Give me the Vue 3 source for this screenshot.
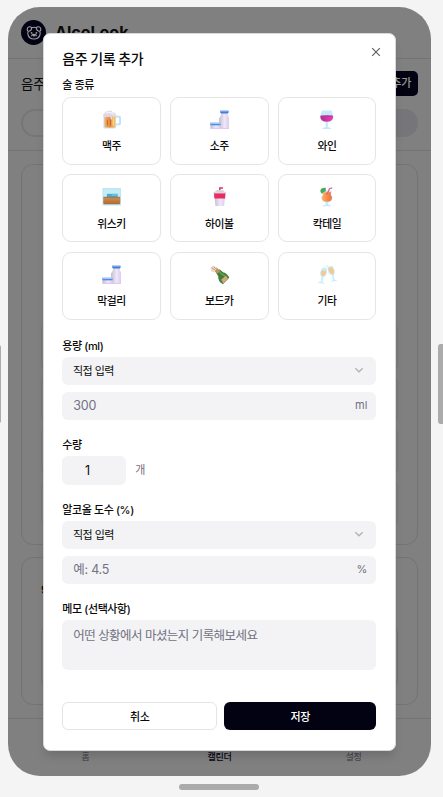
<script setup>
import { ref } from 'vue'

const drinks = [
  { name: '맥주', icon: 'beer' },
  { name: '소주', icon: 'bottle' },
  { name: '와인', icon: 'wine' },
  { name: '위스키', icon: 'whisky' },
  { name: '하이볼', icon: 'cup' },
  { name: '칵테일', icon: 'cocktail' },
  { name: '막걸리', icon: 'bottle' },
  { name: '보드카', icon: 'champagne' },
  { name: '기타', icon: 'cheers' }
]
const volume = ref('')
const count = ref('1')
const strength = ref('')
const memo = ref('')
</script>

<template>
  <div class="stage">
    <div class="phone">
      <header class="topbar">
        <span class="logo">
          <svg viewBox="0 0 16 16" width="16" height="16" fill="none" stroke="#9d9da1" stroke-width="1.100">
            <path d="M2.300 6.300C.4 5.300 1 2 3.300 1.700c1.100-.1 1.900.3 2.400 1 1.500-.5 3.100-.5 4.600 0 .5-.7 1.300-1.100 2.400-1 2.300.3 2.900 3.600 1 4.600.6 1.200.7 2.500.2 3.700-.8 2.600-3.100 4-5.900 4s-5.100-1.400-5.900-4c-.5-1.200-.4-2.500.2-3.700zM3 6.200c1.500-.3 2.600-1.500 2.700-3.400M13 6.200c-1.500-.3-2.600-1.500-2.700-3.400" />
            <path d="M5.600 11.300c.2-2.600 4.600-2.600 4.800 0M7.200 10h1.600L8 11z" />
            <circle cx="5.600" cy="7.900" r=".4" /><circle cx="10.400" cy="7.900" r=".4" />
          </svg>
        </span>
        <strong class="brand">AlcoLook</strong>
      </header>
      <section class="heading">
        <div class="heading-row">
          <span class="heading-title">음주</span>
          <span class="add">추가</span>
        </div>
        <div class="tabs"><span class="tab"></span></div>
      </section>
      <main class="content">
        <div class="panel large">
          <div v-for="n in 7" :key="n" class="week"></div>
        </div>
        <div class="panel small">
          <div class="month">9</div>
          <div class="summary"></div>
        </div>
      </main>
      <nav class="nav">
        <span>홈</span><span class="active">캘린더</span><span>설정</span>
      </nav>
    </div>
    <span class="home-bar"></span>
    <span class="side left"></span>
    <span class="side right"></span>

    <div class="dialog">
      <button class="close" aria-label="닫기">
        <svg viewBox="0 0 10 10" width="10" height="10"><path d="M1.200 1.200l7.600 7.600M8.800 1.200L1.200 8.800" fill="none" stroke="#626262" stroke-width="1.200" /></svg>
      </button>
      <h2 class="title">음주 기록 추가</h2>
      <div class="label first">술 종류</div>
      <div class="drinks">
        <button v-for="d in drinks" :key="d.name" class="drink">
          <svg class="icon" viewBox="0 0 20 20">
            <defs>
              <linearGradient id="beer-fill" x1="0" x2="1"><stop stop-color="#f6b168" /><stop offset=".5" stop-color="#ed8a36" /><stop offset="1" stop-color="#ffc565" /></linearGradient>
              <linearGradient id="milk-fill" x1="0" x2="1"><stop stop-color="#c4bdcb" /><stop offset=".55" stop-color="#efe8f7" /><stop offset="1" stop-color="#dac9ef" /></linearGradient>
              <linearGradient id="wine-fill" x1="0" x2="1"><stop stop-color="#b92892" /><stop offset="1" stop-color="#f43bad" /></linearGradient>
              <linearGradient id="wood-fill" x1="0" y1="0" x2="0" y2="1"><stop stop-color="#d29058" /><stop offset="1" stop-color="#ac6930" /></linearGradient>
              <linearGradient id="orange-fill" x1="0" x2="1"><stop stop-color="#ffb04e" /><stop offset="1" stop-color="#f36b43" /></linearGradient>
            </defs>
            <g v-if="d.icon === 'beer'">
              <path d="M14 6.800h3.500q1 0 1 1v6q0 1-1 1H14" fill="none" stroke="#b9e4fb" stroke-width="1.900" />
              <path d="M1.500 5h13v12.500q0 1.500-1.500 1.500H3q-1.500 0-1.500-1.500z" fill="#bfe4f7" />
              <path d="M2.500 5h11.200v11.500q0 1.500-1.500 1.500H4q-1.500 0-1.500-1.500z" fill="url(#beer-fill)" />
              <path d="M5.500 10v6M8.700 8v8" stroke="#b86c43" stroke-width="1.100" />
              <path d="M11.500 8v8" stroke="#ffda87" stroke-width="1.200" />
              <path d="M2 7.500q-2-3 1-4.600Q4 .6 6.600 1q3-1.200 4.600 1.400 3.500.2 3 3.800-.3 1.500-1.600 1.200L10.500 7v2q-1 2-2 0V7z" fill="#ded8e4" />
              <path d="M4 3.500q2-2 4-.5 3-.8 4 1.500" fill="none" stroke="#f4effa" stroke-width="1.500" />
            </g>
            <g v-else-if="d.icon === 'bottle'">
              <path d="M11.300 3h7v2.500l1.500 3.200V19H9.200V9l2.100-3.500z" fill="url(#milk-fill)" />
              <path d="M10.500.7h8.500v1.500l-.8 1.400h-6.800l-.9-1.400z" fill="#417fda" />
              <path d="M10.500.7h8.500v1h-8.500z" fill="#83b4f3" />
              <path d="M.4 13h10.500v6H.4z" fill="url(#milk-fill)" />
              <path d="M.4 13h10.500v2.700H.4z" fill="#4b8ee9" />
              <path d="M.4 13h10.500v1H.4z" fill="#d7e8ff" />
              <path d="M.4 18.500h19.400v1H.4z" fill="#dfc6f3" />
            </g>
            <g v-else-if="d.icon === 'wine'">
              <path d="M5 .5h10l1.700 6q.6 5.400-5.600 6v5l3.200 1v1H5.700v-1l3.200-1v-5q-6.300-.7-5.700-6z" fill="#c3eafa" />
              <path d="M3.500 6h13q.8 5.800-6.500 6.100Q2.700 11.800 3.500 6z" fill="url(#wine-fill)" />
              <ellipse cx="10" cy="6.200" rx="6.200" ry=".9" fill="#b93a96" />
            </g>
            <g v-else-if="d.icon === 'whisky'">
              <path d="M.5 1h19v18H.5z" fill="#bfe6f5" />
              <path d="M2 2.500h16v9H2z" fill="#c5edf5" />
              <path d="M5 7h11v4H5z" fill="#4eabc9" /><path d="M10 7h6v2h-6z" fill="#63c5e5" />
              <path d="M1.300 10.200h17.400v6.200q0 1.300-1.300 1.300H2.600q-1.300 0-1.300-1.300z" fill="url(#wood-fill)" />
              <path d="M1.500 10.500h17" stroke="#8f6b4e" stroke-width=".8" />
            </g>
            <g v-else-if="d.icon === 'cup'">
              <path d="M10 5V1h3.300" fill="none" stroke="#d92f5c" stroke-width="1.400" />
              <path d="M5 5.500Q5.500 3.200 8 3.200h4q2.500 0 3 2.300z" fill="#d8d1de" />
              <path d="M4.300 7h11.400l-1.300 12.600H5.600z" fill="url(#milk-fill)" />
              <path d="M4 6.200h12l-.6 5.600H4.600z" fill="#e92d60" />
              <path d="M3.500 5h13v1.600h-13z" fill="#dfd6e5" />
            </g>
            <g v-else-if="d.icon === 'cocktail'">
              <path d="M5 3.700h10.600Q13.400 7 15.800 10q.6 4.700-4.300 5.700v2.600l3 .7v.8H5.800V19l3-.7v-2.600Q4 14.700 4.500 10 7 7 5 3.700z" fill="#c5eafa" />
              <path d="M6 5.400h8.500Q13.200 7.700 15.300 10.200q.3 4.700-5.100 5-5.400-.3-5.100-5 2.300-2.500.9-4.800z" fill="url(#orange-fill)" />
              <path d="M3.500 4.500q-.5-4 5.500-3.800v4q-3-.2-3.500 2.300-1.500-.7-2-2.500z" fill="#43a95b" />
              <path d="M10 8l2.800-6.300L15.600.8" fill="none" stroke="#e95f7d" stroke-width="1.300" />
            </g>
            <g v-else-if="d.icon === 'champagne'">
              <path d="M6 7.800l3.800-3.500 3.500 3.200q3.900.8 6.500 5.400l-6.500 6.700q-5.300-2.800-4.800-8z" fill="#417d3e" />
              <path d="M9.500 7l3 2.500q3 1 4.700 4.300" fill="none" stroke="#69a04a" stroke-width="1.500" />
              <path d="M11.300 15.200l5-4.100 2.200 2.800-4.800 4.700z" fill="#d9a673" />
              <path d="M3.500 5.200l3-2.800 4.200 3.700-3.400 3z" fill="#be9251" />
              <path d="M.5 2.500L2.800.5l4.300 1.700-.8 2.500-2.500 2.700-2.500-1z" fill="#ead9c7" />
              <path d="M2 3l3 2M4 2l2 2" stroke="#b78a72" stroke-width=".8" />
            </g>
            <g v-else>
              <path d="M5.500 2.500l4.800 1q.7 7.500-4 9l-.8 5 2.300 1-.1.800-6.700-1.100.1-.8 2.700-.3.800-5q-3.300-3 .9-9.600zM11 1.800l4.500-1q4.500 6 1.700 9.400l.8 5 2.200.2v.8l-5.700 1.100-.1-.8 2-.9-.9-4.800Q10.500 9.500 11 1.800z" fill="#c6edfa" />
              <path d="M4.900 5.500l4.500.8q-.2 4.600-3.500 5.300-2.700-1.500-1-6.100zM11.500 3.200l4.200-.8q3.200 4.300.8 7.200-4-.4-5-6.400z" fill="#f7c78f" />
              <path d="M7.500 1.500l1 1M10.300.5v1.700" stroke="#a7ddf2" stroke-width=".8" />
            </g>
          </svg>
          <span>{{ d.name }}</span>
        </button>
      </div>

      <div class="label volume-label">용량 (ml)</div>
      <div class="field select">
        <span>직접 입력</span>
        <svg viewBox="0 0 10 10" width="10" height="10"><path d="M1.300 3.200L5 6.800l3.700-3.600" fill="none" stroke="#b1b1b3" stroke-width="1.200" /></svg>
      </div>
      <label class="field below">
        <input v-model="volume" placeholder="300"><span class="unit">ml</span>
      </label>

      <div class="label gap">수량</div>
      <div class="quantity">
        <input v-model="count"><span>개</span>
      </div>

      <div class="label gap">알코올 도수 (%)</div>
      <div class="field select">
        <span>직접 입력</span>
        <svg viewBox="0 0 10 10" width="10" height="10"><path d="M1.300 3.200L5 6.800l3.700-3.600" fill="none" stroke="#b1b1b3" stroke-width="1.200" /></svg>
      </div>
      <label class="field below">
        <input v-model="strength" placeholder="예: 4.5"><span class="unit">%</span>
      </label>

      <div class="label gap memo-label">메모 (선택사항)</div>
      <textarea v-model="memo" placeholder="어떤 상황에서 마셨는지 기록해보세요"></textarea>
      <div class="actions">
        <button class="cancel">취소</button>
        <button class="save">저장</button>
      </div>
    </div>
  </div>
</template>

<style>
body { margin: 0; background: #f4f4f4; }
</style>

<style scoped>
* { box-sizing: border-box; }
.stage {
  position: relative;
  width: 443px;
  height: 797px;
  overflow: hidden;
  padding: 7px 12px 21px 8px;
  font-family: Inter, "Noto Sans CJK KR", sans-serif;
  font-size: 11px;
  color: #0a0a0a;
}
button, input, textarea { font: inherit; color: inherit; margin: 0; outline: none; letter-spacing: inherit; }
.phone {
  width: 423px;
  height: 769px;
  border-radius: 32px;
  background: #808080;
  overflow: hidden;
  display: flex;
  flex-direction: column;
}
.topbar { height: 52px; flex: none; border-bottom: 1px solid #737373; padding: 0 13px; display: flex; align-items: center; gap: 9px; }
.logo { width: 25px; height: 25px; border-radius: 50%; background: #030213; display: flex; align-items: center; justify-content: center; }
.brand { font-size: 16px; line-height: 18px; margin-top: -1px; }
.heading { height: 92px; flex: none; padding: 12px 13px 0; border-bottom: 1px solid #737373; }
.heading-row { display: flex; height: 25px; align-items: center; justify-content: space-between; }
.heading-title { font-size: 13.500px; line-height: 20px; letter-spacing: -.5px; }
.add { height: 25px; line-height: 24px; padding: 0 7px 0 40px; border-radius: 5px; background: #030213; color: #999; font-weight: 500; letter-spacing: -.3px; }
.tabs { height: 28px; margin-top: 13px; border-radius: 14px; background: #76767a; padding: 2px; display: flex; }
.tab { width: 50%; border-radius: 12px; background: #808080; }
.content { flex: 1; padding: 13px; display: flex; flex-direction: column; gap: 12px; }
.panel { border: 1px solid #737373; border-radius: 12px; padding: 19px; }
.large { height: 381px; flex: none; display: flex; flex-direction: column; justify-content: flex-end; gap: 8px; }
.week { height: 44px; flex: none; border: 1px solid #777; border-radius: 5px; }
.week:nth-child(-n+3) { visibility: hidden; }
.small { height: 148px; flex: none; }
.month { height: 26px; line-height: 26px; font-size: 12px; font-weight: 600; }
.summary { height: 59px; margin-top: 24px; border: 1px solid #737373; border-radius: 5px; }
.nav { height: 58px; flex: none; border-top: 1px solid #737373; display: grid; grid-template-columns: 155px 113px 155px; text-align: center; padding-top: 31px; line-height: 14px; font-size: 9px; color: #3c3c42; letter-spacing: -.25px; }
.nav .active { color: #030213; font-weight: 500; }
.home-bar { position: absolute; left: 179px; top: 784px; width: 80px; height: 6px; border-radius: 3px; background: #ababab; }
.side { position: absolute; background: #ababab; }
.left { left: -4px; top: 345px; width: 5px; height: 78px; border-radius: 2px; }
.right { left: 438px; top: 344px; width: 8px; height: 80px; border-radius: 3px; }

.dialog {
  position: absolute;
  left: 43px;
  top: 33px;
  width: 353px;
  height: 718px;
  padding: 16px 18.700px 19px 18.300px;
  border: 1px solid #d8d8d8;
  border-radius: 7px;
  background: #fff;
  box-shadow: 0 7px 10px -2px rgba(0, 0, 0, .15);
  letter-spacing: -.4px;
}
.close { position: absolute; right: 14px; top: 13px; width: 10px; height: 10px; padding: 0; border: 0; background: none; display: flex; }
.title { margin: 0; height: 18px; line-height: 18px; font-size: 14px; font-weight: 500; letter-spacing: -.5px; }
.label { height: 14px; line-height: 14px; font-weight: 500; margin-bottom: 4px; }
.label.first { margin: 10px 0 4.800px; }
.label.gap { margin-top: 18px; }
.label.volume-label { margin-top: 19px; }
.label.memo-label { margin-top: 18.500px; }
.drinks { display: grid; grid-template-columns: repeat(3, 1fr); grid-auto-rows: 68.200px; gap: 9.300px; }
.drink { border: 1px solid #e5e5e5; border-radius: 9px; background: #fff; padding: 12px 0 0; display: flex; flex-direction: column; align-items: center; gap: 10.200px; font-size: 10.800px; font-weight: 500; line-height: 16px; }
.icon { width: 19.500px; height: 19.500px; flex: none; }
.field { height: 28px; border-radius: 6px; background: #f3f3f5; padding: 0 11px; display: flex; align-items: center; justify-content: space-between; }
.field input { flex: 1; min-width: 0; padding: 0; border: 0; background: none; font-size: 12.500px; letter-spacing: -.25px; }
.select { padding: 0 12px 2px 10.700px; letter-spacing: -.55px; }
.below { margin-top: 7px; padding-right: 9px; }
::placeholder { color: #717182; opacity: 1; }
.unit { color: #717182; letter-spacing: 0; margin-top: -1px; }
.quantity { display: flex; align-items: center; gap: 9px; height: 29px; color: #717182; }
.quantity span { margin-top: -2px; }
.quantity input { width: 64px; height: 29px; padding: 0 14px 0 0; border: 0; border-radius: 6px; background: #f3f3f5; text-align: center; color: #0a0a0a; font-size: 12.500px; }
textarea { display: block; width: 100%; height: 50px; resize: none; border: 0; border-radius: 6px; background: #f3f3f5; padding: 6px 11px; font-size: 12.500px; line-height: 19px; letter-spacing: -.55px; }
.actions { display: grid; grid-template-columns: 155px 1fr; gap: 7px; margin-top: 31.800px; }
.actions button { height: 28px; padding: 0 0 1px; border-radius: 6px; font-weight: 500; }
.cancel { border: 1px solid #e5e5e5; background: #fff; }
.save { border: 0; background: #030213; color: #fff; }
</style>
